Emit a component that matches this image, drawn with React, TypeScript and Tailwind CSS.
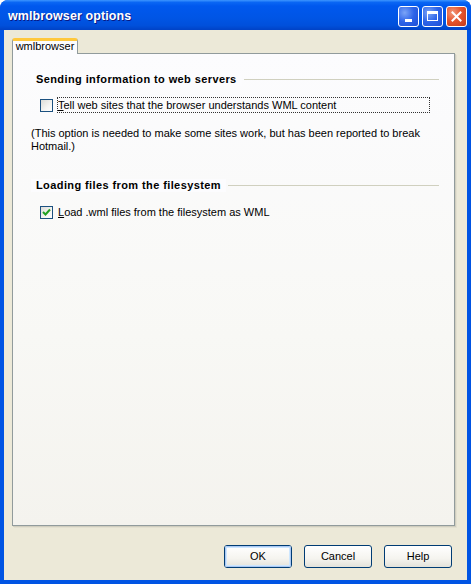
export default function App() {
  return (
    <div className="w-[471px] h-[584px] flex flex-col bg-[#0054E3] rounded-t-[8px] overflow-hidden font-['Liberation_Sans',Arial,sans-serif] text-[11px] text-black select-none">
      {/* Title bar */}
      <div className="h-[30px] shrink-0 flex items-center pl-[8px] pr-[4px] bg-[linear-gradient(to_bottom,#3D95FF_0%,#0A66F4_8%,#0058EE_20%,#0055E5_60%,#0050DB_85%,#0042C6_100%)]">
        <span className="flex-1 pt-[3px] text-white font-bold text-[12.5px] tracking-[0.1px] [text-shadow:1px_1px_0_#0A1883]">wmlbrowser options</span>
        <div className="flex gap-[3px] pt-[2px]">
          <TitleButton>
            <div className="w-[7px] h-[3px] bg-white mt-[8px]" />
          </TitleButton>
          <TitleButton>
            <div className="w-[11px] h-[10px] border border-white border-t-[3px]" />
          </TitleButton>
          <TitleButton close>
            <svg width="11" height="11" viewBox="0 0 11 11">
              <path d="M1.5 1.5 L9.5 9.5 M9.5 1.5 L1.5 9.5" stroke="white" strokeWidth="2" strokeLinecap="square" />
            </svg>
          </TitleButton>
        </div>
      </div>

      {/* Client area */}
      <div className="flex-1 flex flex-col mx-[4px] mb-[4px] bg-[#ECE9D8]">
        <div className="flex flex-col pl-[8px] pr-[12px] pt-[8px]">
          {/* Tab */}
          <div className="flex">
            <div className="relative w-[66px] h-[16px] flex items-end justify-center border border-b-0 border-[#919B9C] rounded-t-[3px] bg-[#FCFCFE] border-t-[3px] border-t-[#FFC83C] pb-[1px] z-10 -mb-px">
              <span className="leading-[13px]">wmlbrowser</span>
            </div>
          </div>
          {/* Panel */}
          <div className="h-[473px] border border-[#919B9C] bg-[linear-gradient(to_bottom,#FCFCFE_0%,#F8F8F5_60%,#F4F3EE_100%)] shadow-[1px_1px_0_#D0CEBF,2px_2px_0_#E3E0D0] pl-[18px] pr-[15px] pt-[19px]">
            <SectionHeader title="Sending information to web servers" />
            <div className="mt-[11px] pl-[9px] flex items-center">
              <Checkbox />
              <div className="ml-[4px] w-[373px] h-[16px] flex items-center pl-[1px] outline-1 outline-dotted outline-[#333] -outline-offset-1">
                <span><u>T</u>ell web sites that the browser understands WML content</span>
              </div>
            </div>
            <p className="mt-[14px] leading-[13px]">
              (This option is needed to make some sites work, but has been reported to break<br />
              Hotmail.)
            </p>
            <div className="mt-[26px]">
              <SectionHeader title="Loading files from the filesystem" />
            </div>
            <div className="mt-[12px] pl-[9px] flex items-center">
              <Checkbox checked />
              <span className="ml-[5px]"><u>L</u>oad .wml files from the filesystem as WML</span>
            </div>
          </div>
        </div>

        {/* Buttons */}
        <div className="mt-[19px] flex justify-end gap-[12px] pr-[15px]">
          <Button primary>OK</Button>
          <Button>Cancel</Button>
          <Button>Help</Button>
        </div>
      </div>
    </div>
  );
}

function TitleButton({ children, close }: { children: React.ReactNode; close?: boolean }) {
  return (
    <div
      className={`w-[21px] h-[21px] rounded-[3px] border border-white flex items-center justify-center ${
        close
          ? 'bg-[radial-gradient(circle_at_30%_30%,#F29A7C_0%,#E5552E_45%,#C23A1B_100%)]'
          : 'bg-[radial-gradient(circle_at_30%_30%,#7BA4F7_0%,#2C63E8_50%,#1D4FD6_100%)]'
      }`}
    >
      {children}
    </div>
  );
}

function SectionHeader({ title }: { title: string }) {
  return (
    <div className="flex items-center">
      <span className="font-bold px-[5px] bg-[#FCFCFE] leading-[13px] tracking-[0.4px]">{title}</span>
      <div className="flex-1 h-px bg-[#D0D0BF] ml-[2px]" />
    </div>
  );
}

function Checkbox({ checked }: { checked?: boolean }) {
  return (
    <div className="w-[13px] h-[13px] shrink-0 border border-[#1C5180] bg-[linear-gradient(135deg,#DCDCD7_0%,#F5F5F2_60%,#FFFFFF_100%)] flex items-center justify-center">
      {checked && (
        <svg width="9" height="9" viewBox="0 0 9 9">
          <path d="M1 4 L3.5 6.5 L8 1.5" fill="none" stroke="#21A121" strokeWidth="2" />
        </svg>
      )}
    </div>
  );
}

function Button({ children, primary }: { children: React.ReactNode; primary?: boolean }) {
  return (
    <div className="w-[68px] h-[23px] rounded-[3px] border border-[#003C74] bg-[linear-gradient(to_bottom,#FFFFFF_0%,#F5F4EF_60%,#E3E2DA_100%)] flex items-center justify-center">
      <div className={`w-full h-full flex items-center justify-center rounded-[2px] ${primary ? 'shadow-[inset_0_0_0_1px_#AAC8F2,inset_0_0_0_2px_#CEE7FF]' : ''}`}>
        {children}
      </div>
    </div>
  );
}
